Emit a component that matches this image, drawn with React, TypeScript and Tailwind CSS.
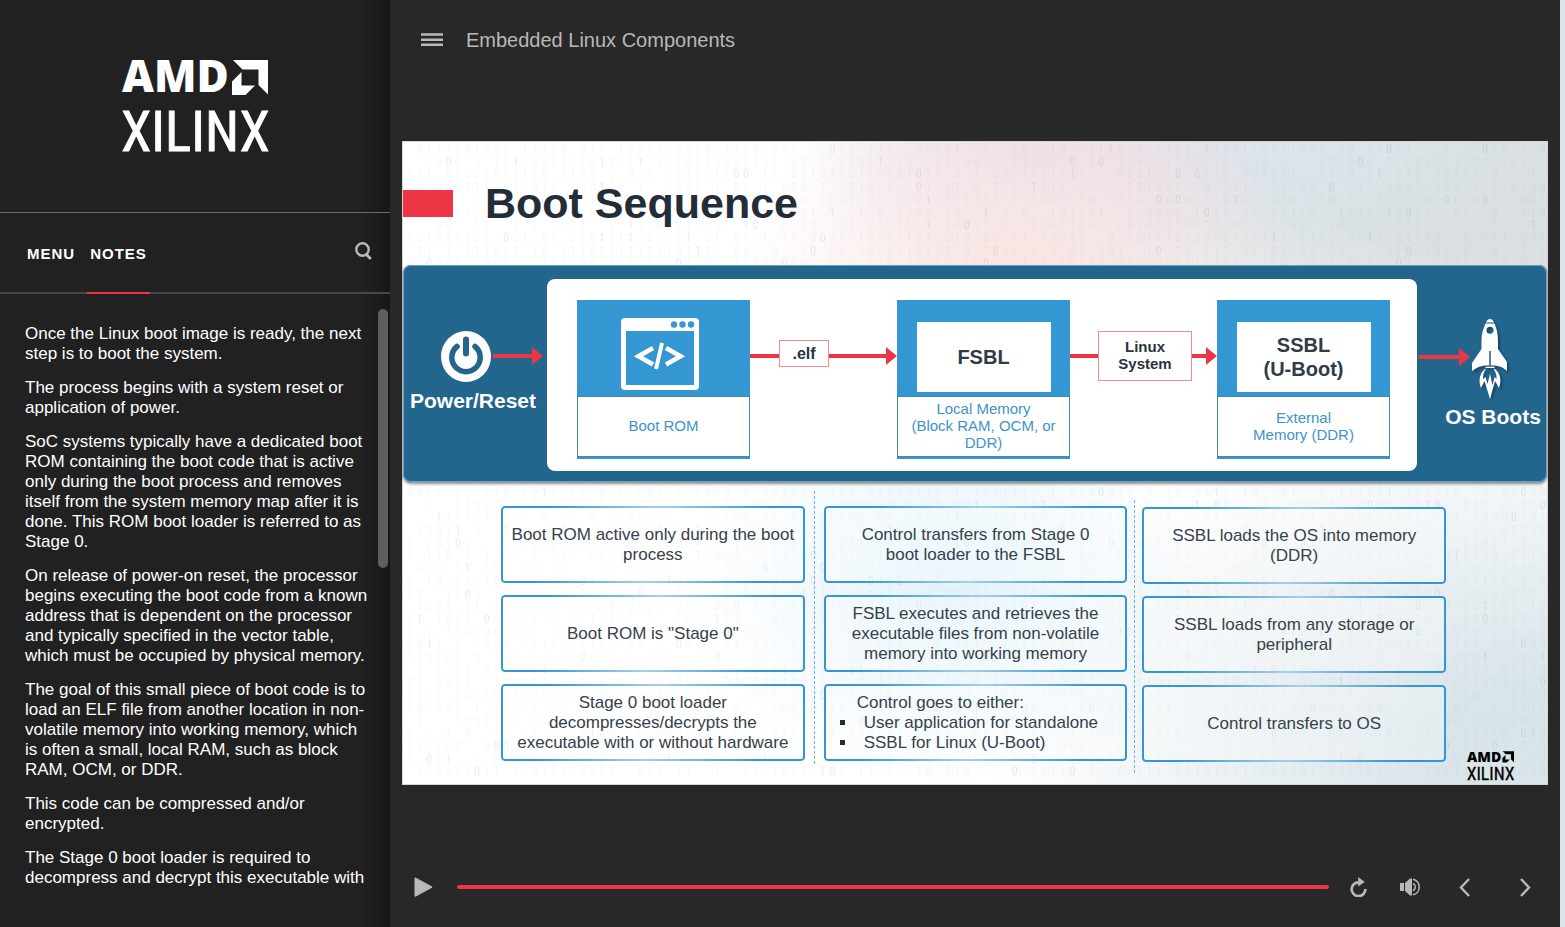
import React from "react";

const notes = [
  "Once the Linux boot image is ready, the next step is to boot the system.",
  "The process begins with a system reset or application of power.",
  "SoC systems typically have a dedicated boot ROM containing the boot code that is active only during the boot process and removes itself from the system memory map after it is done. This ROM boot loader is referred to as Stage 0.",
  "On release of power-on reset, the processor begins executing the boot code from a known address that is dependent on the processor and typically specified in the vector table, which must be occupied by physical memory.",
  "The goal of this small piece of boot code is to load an ELF file from another location in non-volatile memory into working memory, which is often a small, local RAM, such as block RAM, OCM, or DDR.",
  "This code can be compressed and/or encrypted.",
  "The Stage 0 boot loader is required to decompress and decrypt this executable with",
];

function Logo({ className }: { className: string }) {
  return (
    <svg viewBox="0 0 146 92" className={className} overflow="visible" role="img" aria-label="AMD Xilinx" fill="currentColor">
      <text x="0" y="32" fontFamily="'Open Sans', Lato, sans-serif" fontWeight="800" fontSize="44">AMD</text>
      <path d="M111 0h35v34.500l-9.500-9.500V9.500h-16z" />
      <path d="M119.500 12v13.500H133l-9.500 9.500H110V21.500z" />
      <text x="-1" y="91" stroke="currentColor" strokeWidth="0.8" fontFamily="'Liberation Sans Narrow', 'Roboto Condensed', 'Liberation Sans', sans-serif" fontSize="55">XILINX</text>
    </svg>
  );
}

function Digits() {
  let seed = 7;
  const next = () => {
    seed = (seed * 16807) % 2147483647;
    return seed / 2147483647;
  };
  const rows = Array.from({ length: 50 }, () =>
    Array.from({ length: 119 }, () => {
      const r = next();
      const c = next() > 0.5 ? "1" : "0";
      return { c, o: r < 0.25 ? 0 : r > 0.95 ? 0.1 : 0.04 };
    }),
  );
  return (
    <svg
      className="pointer-events-none absolute inset-0 h-full w-full"
      aria-hidden="true"
      fill="#444"
      fontSize="12"
      fontFamily="'Liberation Sans Narrow', 'Roboto Condensed', 'Liberation Sans', sans-serif"
    >
      {rows.map((row, y) =>
        row.map((d, x) =>
          d.o ? (
            <text key={`${y}-${x}`} x={4 + x * 9.6} y={11 + y * 12.7} opacity={d.o}>{d.c}</text>
          ) : null,
        ),
      )}
    </svg>
  );
}

function ArrowHead() {
  return (
    <svg viewBox="0 0 11 18" className="h-[18px] w-[11px] shrink-0" fill="#ec3646" aria-hidden="true">
      <path d="M0 0l11 9-11 9z" />
    </svg>
  );
}

function Connector({ label, tall }: { label: React.ReactNode; tall?: boolean }) {
  return (
    <div className="mt-[21px] flex h-[112px] min-w-0 flex-1 items-center">
      <span className={"h-1 bg-[#ec3646] " + (tall ? "w-7" : "w-[29px]")} />
      <span
        className={
          "flex items-center justify-center border border-[#f08a94] text-center font-bold text-[#2a333b] " +
          (tall ? "h-[50px] w-[94px] pb-[2px] text-[15px] leading-[17px]" : "mb-[5px] h-[27px] w-[50px] text-base")
        }
      >
        {label}
      </span>
      <span className="h-1 min-w-0 flex-1 bg-[#ec3646]" />
      <ArrowHead />
    </div>
  );
}

function Stage({ children, caption }: { children: React.ReactNode; caption: React.ReactNode }) {
  return (
    <div className="mt-[21px] h-[159px] w-[173px] shrink-0 bg-[#3497d1] pb-[2px]">
      <div className="flex h-24 items-end justify-center">{children}</div>
      <div className="flex h-[61px] items-center justify-center border border-[#4a86aa] bg-white pb-[2px] text-center text-[15px] leading-[17px] text-[#3d93cb]">
        {caption}
      </div>
    </div>
  );
}

function Note({ children, start }: { children: React.ReactNode; start?: boolean }) {
  return (
    <div
      className={
        "relative flex h-[77px] flex-col justify-center rounded-[4px] bg-white/30 text-[17px] leading-[20px] text-[#35414b] before:pointer-events-none before:absolute before:inset-0 before:rounded-[4px] before:bg-[linear-gradient(100deg,#3497d1_15%,#a5d0ea_50%,#3497d1_85%)] before:p-[2px] before:content-[''] before:[mask:linear-gradient(#000_0_0)_content-box_exclude,linear-gradient(#000_0_0)] " +
        (start ? "px-4" : "px-1 text-center")
      }
    >
      {children}
    </div>
  );
}

export default function App() {
  return (
    <div className="flex h-screen overflow-hidden bg-[#282828] font-['Liberation_Sans',Arial,sans-serif]">
      <aside className="flex w-[390px] shrink-0 flex-col bg-[linear-gradient(90deg,#212121_0,#212121_360px,#161616_390px)] text-white">
        <div className="flex h-[213px] shrink-0 justify-center border-b border-[#6b6b6b] pt-[60px]">
          <Logo className="h-[92px] w-[146px]" />
        </div>
        <div className="flex h-[81px] shrink-0 items-stretch border-b-2 border-[#474747] pr-[18px] pl-[25px]">
          <button className="px-[2px] pt-[3px] text-[15px] font-bold tracking-[1px]">MENU</button>
          <button className="-mb-[2px] ml-[10px] border-b-2 border-[#ec3646] px-[3px] pt-[3px] text-[15px] font-bold tracking-[1px]">NOTES</button>
          <button aria-label="Search" className="ml-auto pb-1 text-[#b9b9b9]">
            <svg viewBox="0 0 18 18" className="h-[18px] w-[18px]" fill="none" stroke="currentColor" strokeWidth="2.4">
              <circle cx="8.500" cy="7.500" r="6.200" />
              <path d="M12 12l4.800 5" strokeWidth="2.800" />
            </svg>
          </button>
        </div>
        <div className="mt-[15px] mb-[38px] flex min-h-0 flex-1 justify-between overflow-hidden pr-[2px] pl-[25px]">
          <div className="w-[346px] space-y-[14px] pt-[15px] text-[17px] leading-5">
            {notes.map((n) => (
              <p key={n}>{n}</p>
            ))}
          </div>
          <div className="h-[259px] w-[10px] rounded-full bg-[#5e5e5e]" />
        </div>
      </aside>

      <main className="flex min-w-0 flex-1 flex-col">
        <header className="flex h-20 shrink-0 items-center pl-[31px] text-[#b9b9b9]">
          <button aria-label="Toggle sidebar">
            <svg viewBox="0 0 22 14" className="h-[14px] w-[22px]" fill="currentColor">
              <path d="M0 .3h22v2.500H0zM0 5.500h22V8H0zM0 10.600h22v2.500H0z" />
            </svg>
          </button>
          <h1 className="ml-[23px] text-xl">Embedded Linux Components</h1>
        </header>

        <section className="relative mx-3 mt-[61px] border border-[#d5d5d5] bg-white bg-[radial-gradient(ellipse_280px_190px_at_54%_20%,#fae5e3_0%,#fae5e300_100%),radial-gradient(ellipse_240px_150px_at_56%_0%,#ecdde9_0%,#ecdde900_100%),radial-gradient(ellipse_300px_130px_at_76%_0%,#dbe6ec_0%,#dbe6ec00_100%),radial-gradient(ellipse_260px_200px_at_48%_70%,#e2f2fb_0%,#e2f2fb00_100%),radial-gradient(ellipse_760px_330px_at_100%_0%,#dadfe1_35%,#dadfe100_100%),radial-gradient(ellipse_560px_360px_at_100%_95%,#dae5ea_20%,#dae5ea00_100%)]">
          <Digits />
          <div className="relative flex h-[123px] items-center">
            <span className="h-[27px] w-[50px] bg-[#ec3646]" />
            <h2 className="ml-8 text-[43px] font-bold text-[#232d37]">Boot Sequence</h2>
          </div>

          <div className="relative flex h-[217px] rounded-[8px] bg-[#22658d] pt-[14px] pb-[11px] shadow-[inset_0_0_0_1px_#6f9fbe,0_2px_3px_rgba(0,0,0,0.45)]">
            <div className="flex w-[144px] shrink-0 flex-col pt-[21px] text-white">
              <div className="flex h-[112px] items-center pl-[38px]">
                <svg viewBox="0 0 50 51" className="h-[51px] w-[50px] shrink-0" role="img" aria-label="Power">
                  <ellipse cx="25" cy="25.500" rx="25" ry="25.500" fill="#fff" />
                  <path d="M16 15.500a14.200 14.200 0 1 0 18 0" fill="none" stroke="#22658d" strokeWidth="5.500" strokeLinecap="round" />
                  <path d="M25 8.500v14" stroke="#22658d" strokeWidth="6" strokeLinecap="round" />
                </svg>
                <span className="ml-[2px] h-1 w-[39px] bg-[#ec3646]" />
                <ArrowHead />
              </div>
              <p className="-mt-[27px] pr-1 text-center text-[21px] font-bold">Power/Reset</p>
            </div>

            <div className="flex min-w-0 flex-1 rounded-[8px] bg-white pr-[27px] pl-[30px]">
              <Stage caption="Boot ROM">
                <svg viewBox="0 0 78 72" className="mr-2 mb-[6px] h-[72px] w-[78px]" role="img" aria-label="Code window">
                  <path fillRule="evenodd" fill="#fff" d="M4 0h70a4 4 0 0 1 4 4v64a4 4 0 0 1-4 4H4a4 4 0 0 1-4-4V4a4 4 0 0 1 4-4zM5 13v54h68V13z" />
                  <g fill="#3497d1"><circle cx="53" cy="6.500" r="3.200" /><circle cx="61.500" cy="6.500" r="3.200" /><circle cx="70" cy="6.500" r="3.200" /></g>
                  <path d="M32 30L17.500 38.300 32 46.500M45 30l14.500 8.300L45 46.500" fill="none" stroke="#fff" strokeWidth="4.600" />
                  <path d="M41 25l-6 26" stroke="#fff" strokeWidth="4" />
                </svg>
              </Stage>
              <Connector label=".elf" />
              <Stage caption={<>Local Memory<br />(Block RAM, OCM, or<br />DDR)</>}>
                <div className="mb-1 flex h-[70px] w-[134px] items-center justify-center bg-white text-xl font-bold text-[#2f3b47]">FSBL</div>
              </Stage>
              <Connector tall label={<>Linux<br />System</>} />
              <Stage caption={<>External<br />Memory (DDR)</>}>
                <div className="mb-1 flex h-[70px] w-[134px] items-center justify-center bg-white text-center text-xl leading-6 font-bold text-[#2f3b47]">
                  SSBL<br />(U-Boot)
                </div>
              </Stage>
            </div>

            <div className="flex w-[130px] shrink-0 flex-col pt-[21px] text-white">
              <div className="flex h-[114px] items-center pl-[2px]">
                <span className="h-1 w-10 bg-[#ec3646]" />
                <ArrowHead />
                <svg viewBox="0 0 36 80" className="mt-1 ml-[2px] h-[80px] w-9 drop-shadow-[2px_2px_1px_rgba(0,0,0,0.3)]" role="img" aria-label="Rocket" fill="#fff">
                  <path d="M14 3.500C15 1 16.500 0 18 0s3 1 4 3.500z" />
                  <path fillRule="evenodd" d="M13.500 4.500h9c2.500 5.500 3.500 11 3.500 17.500v8L35 43v9c-3-3-7-5-12-5.500h-4.300V32h-1.400v14.500H13C8 47 4 49 0 52v-8l9.500-14v-8c0-6.500 1.500-12 4-17.500zM18 7.800a3.500 3.500 0 1 0 0 7 3.500 3.500 0 0 0 0-7z" />
                  <path d="M13.500 47.700h9v1.300h-9z" />
                  <path d="M13 50C8 54 6 61 9 69l3.500-7L18 80l5-18 4 7c3-8 1-15-4-19h-1.500c2 3 3.500 6 3 10l-2-2-2 8L18 55l-2.500 10-2-7-2.500 2c0-4 .5-7 3-10z" />
                </svg>
              </div>
              <p className="-mt-[13px] pl-[22px] text-center text-[21px] font-bold whitespace-nowrap">OS Boots</p>
            </div>
          </div>

          <div className="relative flex h-[302px] items-start pr-[101px] pl-[98px]">
            <div className="mt-6 flex flex-1 flex-col gap-3">
              <Note>Boot ROM active only during the boot process</Note>
              <Note>Boot ROM is "Stage 0"</Note>
              <Note>Stage 0 boot loader<br />decompresses/decrypts the<br />executable with or without hardware</Note>
            </div>
            <div className="mx-[9px] mt-[9px] h-[273px] border-l border-dashed border-[#6db5e0]" />
            <div className="mt-6 flex flex-1 flex-col gap-3">
              <Note>Control transfers from Stage 0<br />boot loader to the FSBL</Note>
              <Note>FSBL executes and retrieves the executable files from non-volatile memory into working memory</Note>
              <Note start>
                <p className="pl-[17px]">Control goes to either:</p>
                <ul>
                  {["User application for standalone", "SSBL for Linux (U-Boot)"].map((t) => (
                    <li key={t} className="flex items-center whitespace-nowrap">
                      <span className="mr-[19px] h-[5px] w-[5px] bg-[#232d37]" />
                      {t}
                    </li>
                  ))}
                </ul>
              </Note>
            </div>
            <div className="mx-[7px] mt-[18px] h-[273px] border-l border-dashed border-[#6db5e0]" />
            <div className="mt-[25px] flex flex-1 flex-col gap-3">
              <Note>SSBL loads the OS into memory<br />(DDR)</Note>
              <Note>SSBL loads from any storage or<br />peripheral</Note>
              <Note>Control transfers to OS</Note>
            </div>
          </div>
          <div className="absolute right-[33px] bottom-[3px] text-black">
            <Logo className="h-[30px] w-[47px]" />
          </div>
        </section>

        <footer className="mt-auto flex h-20 shrink-0 items-center pr-[29px] pl-6 text-[#b9b9b9]">
          <button aria-label="Play">
            <svg viewBox="0 0 19 20" className="h-5 w-[19px]" fill="currentColor"><path d="M1.500.6l16.500 9q.8.600 0 1.200l-16.500 9Q.5 20 .5 19V1.500Q.5.200 1.500.6z" /></svg>
          </button>
          <input
            type="range"
            aria-label="Slide progress"
            defaultValue={100}
            className="ml-6 h-1 min-w-0 flex-1 appearance-none rounded-full bg-[#ec3646] [&::-webkit-slider-thumb]:h-0 [&::-webkit-slider-thumb]:w-0 [&::-webkit-slider-thumb]:appearance-none"
          />
          <button aria-label="Replay" className="ml-[21px]">
            <svg viewBox="0 0 17 20" className="h-5 w-[17px]" fill="none" stroke="currentColor" strokeWidth="2.700">
              <path d="M8.500 5.300a6.900 6.900 0 1 0 6.900 6.700" />
              <path d="M8.200 0l6.600 5-6.600 4.600z" fill="currentColor" stroke="none" />
            </svg>
          </button>
          <button aria-label="Volume" className="ml-[33px]">
            <svg viewBox="0 0 20 18" className="h-[18px] w-5" fill="currentColor">
              <path d="M0 5h4v8H0zM5 5l5-4.500h2v17h-2L5 13z" />
              <path d="M13 5.500a3.800 3.800 0 0 1 0 7M13 1.200a8 8 0 0 1 0 15.600" fill="none" stroke="currentColor" strokeWidth="1.500" />
            </svg>
          </button>
          <button aria-label="Previous" className="ml-[39px]">
            <svg viewBox="0 0 11 19" className="h-[19px] w-[11px]" fill="none" stroke="currentColor" strokeWidth="2.400"><path d="M10 1L2 9.500 10 18" /></svg>
          </button>
          <button aria-label="Next" className="ml-[50px]">
            <svg viewBox="0 0 11 19" className="h-[19px] w-[11px]" fill="none" stroke="currentColor" strokeWidth="2.400"><path d="M1 1l8 8.500L1 18" /></svg>
          </button>
        </footer>
      </main>
      <div className="w-[5px] shrink-0 bg-[#dfe3ec]" />
    </div>
  );
}
